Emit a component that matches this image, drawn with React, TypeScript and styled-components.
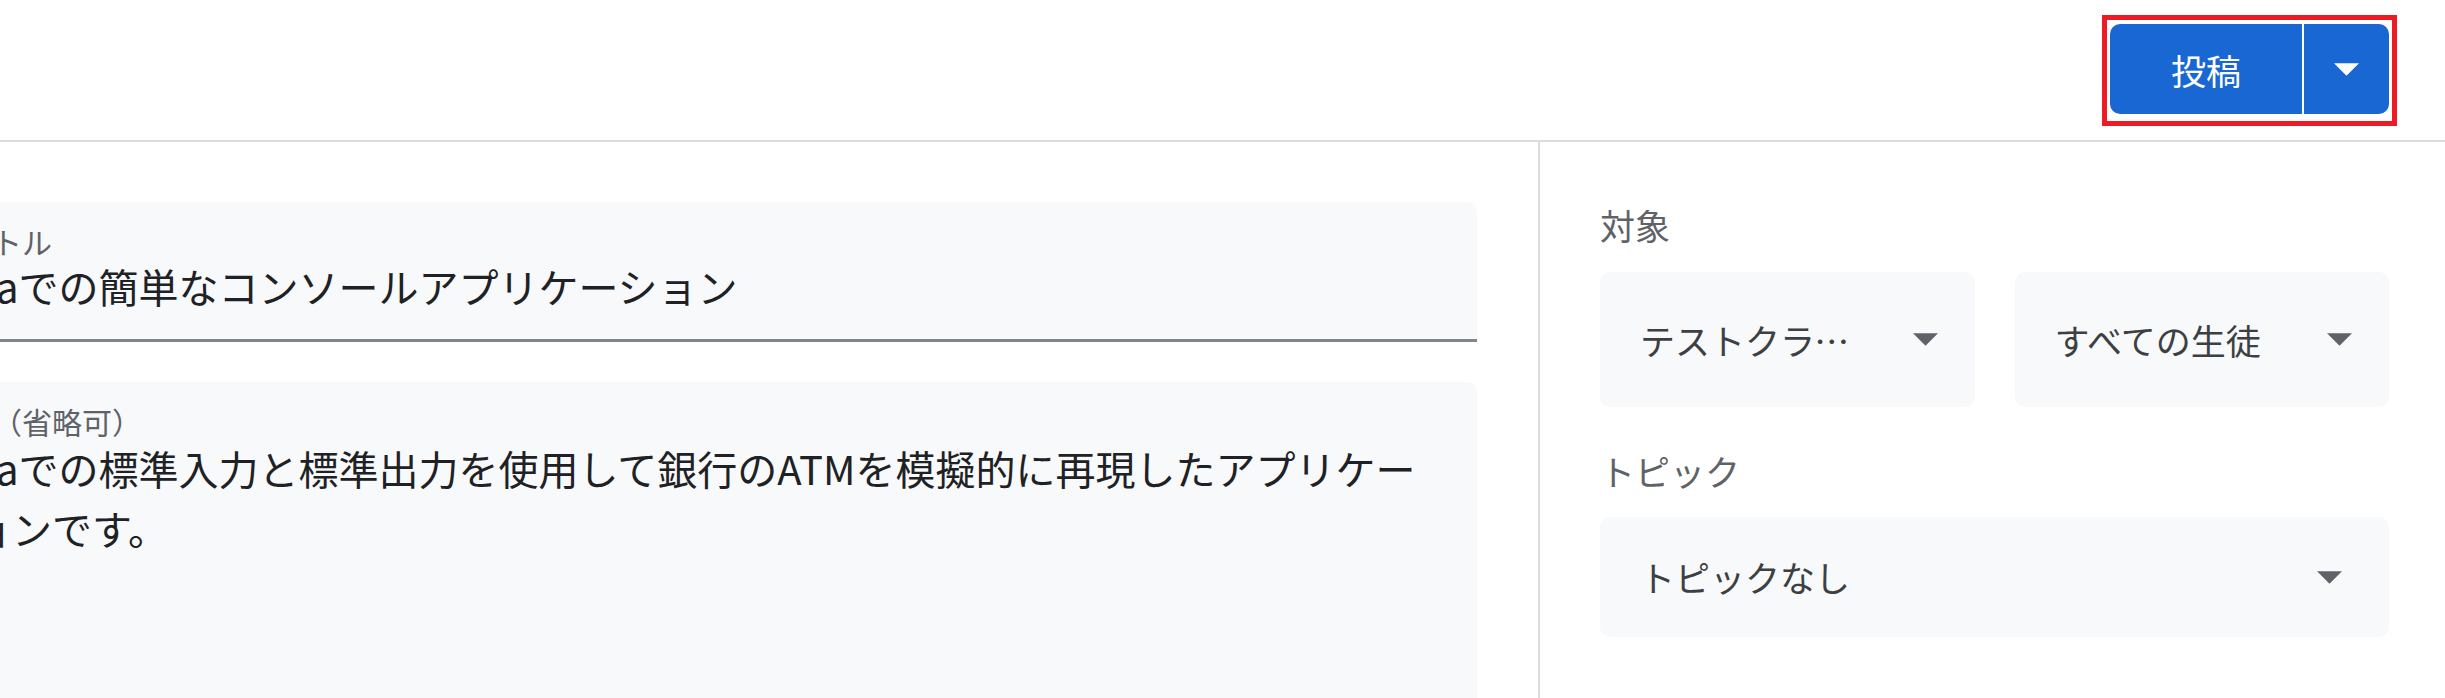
import styled, { createGlobalStyle } from "styled-components";

const GlobalStyle = createGlobalStyle`
  *, *::before, *::after {
    box-sizing: border-box;
  }

  html, body {
    margin: 0;
    padding: 0;
    background: #ffffff;
    overflow: hidden;
  }

  body {
    font-family: "Noto Sans CJK JP", "Noto Sans", sans-serif;
    color: #202124;
  }
`

const Page = styled.div`
  width: 2445px;
  height: 698px;
  display: flex;
  flex-direction: column;
  overflow: hidden;
`

const Header = styled.header`
  height: 142px;
  flex: none;
  display: flex;
  justify-content: flex-end;
  align-items: flex-start;
  padding: 15px 48px 0 0;
  border-bottom: 2px solid #dadce0;
`

// red annotation frame drawn around the post button
const Highlight = styled.div`
  border: 5px solid #ed1c24;
  padding: 4px 3px 7px 3px;
`

const SplitButton = styled.div`
  display: flex;
  height: 90px;
  border-radius: 10px;
  overflow: hidden;
  background: #1967d2;
`

const PostButton = styled.button`
  width: 192px;
  border: none;
  background: transparent;
  color: #ffffff;
  font-family: inherit;
  font-size: 35px;
  font-weight: 400;
  cursor: pointer;
`

const MenuButton = styled.button`
  width: 87px;
  border: none;
  border-left: 2px solid #ffffff;
  background: transparent;
  display: flex;
  align-items: center;
  justify-content: center;
  cursor: pointer;
`

const Main = styled.main`
  flex: 1;
  min-height: 0;
  display: flex;
`

// the editor column is scrolled so its left part is outside the view
const Editor = styled.section`
  flex: 1;
  margin-left: -168px;
  padding: 60px 61px 0 60px;
  border-right: 2px solid #dadce0;
  display: flex;
  flex-direction: column;
  gap: 40px;
`

const Field = styled.div<{ $underline?: boolean; $grow?: boolean }>`
  background: #f8f9fa;
  border-radius: 10px 10px 0 0;
  padding: 22px 40px ${p => (p.$underline ? "25px" : "22px")};
  border-bottom: ${p => (p.$underline ? "3px solid #80868b" : "none")};
  min-height: ${p => (p.$grow ? "360px" : "auto")};
`

const FieldLabel = styled.div`
  font-size: 30px;
  line-height: 34px;
  color: #5f6368;
  white-space: nowrap;
`

const FieldValue = styled.div<{ $multiline?: boolean }>`
  font-size: 40px;
  line-height: ${p => (p.$multiline ? "60px" : "56px")};
  color: #202124;
  white-space: ${p => (p.$multiline ? "normal" : "nowrap")};
`

const Sidebar = styled.aside`
  width: 905px;
  flex: none;
  padding: 58px 56px 0 60px;
  display: flex;
  flex-direction: column;
`

const SideLabel = styled.div<{ $spaced?: boolean }>`
  font-size: 35px;
  line-height: 50px;
  color: #5f6368;
  margin-top: ${p => (p.$spaced ? "39px" : "0")};
`

const SelectRow = styled.div`
  display: grid;
  grid-template-columns: 1fr 1fr;
  gap: 40px;
  margin-top: 22px;
`

const Select = styled.div<{ $height: number; $arrowGap: number; $spaced?: boolean }>`
  height: ${p => p.$height}px;
  background: #f8f9fa;
  border-radius: 10px;
  padding: 0 ${p => p.$arrowGap}px 0 40px;
  display: flex;
  align-items: center;
  justify-content: space-between;
  gap: 20px;
  margin-top: ${p => (p.$spaced ? "21px" : "0")};
`

const SelectText = styled.span<{ $maxWidth?: number }>`
  font-size: 35px;
  line-height: 50px;
  color: #3c4043;
  white-space: nowrap;
  overflow: hidden;
  text-overflow: ellipsis;
  max-width: ${p => (p.$maxWidth ? `${p.$maxWidth}px` : "none")};
`

function DropArrow({ color }: { color: string }) {
  return (
    <svg width="25" height="13" viewBox="7 10 10 5" style={{ flex: "none" }}>
      <path d="M7 10l5 5 5-5z" fill={color} />
    </svg>
  )
}

function App() {
  return (
    <Page>
      <GlobalStyle />
      <Header>
        <Highlight>
          <SplitButton>
            <PostButton>投稿</PostButton>
            <MenuButton>
              <DropArrow color="#ffffff" />
            </MenuButton>
          </SplitButton>
        </Highlight>
      </Header>
      <Main>
        <Editor>
          <Field $underline>
            <FieldLabel>タイトル</FieldLabel>
            <FieldValue>Javaでの簡単なコンソールアプリケーション</FieldValue>
          </Field>
          <Field $grow>
            <FieldLabel>説明（省略可）</FieldLabel>
            <FieldValue $multiline>
              Javaでの標準入力と標準出力を使用して銀行のATMを模擬的に再現したアプリケーションです。
            </FieldValue>
          </Field>
        </Editor>
        <Sidebar>
          <SideLabel>対象</SideLabel>
          <SelectRow>
            <Select $height={135} $arrowGap={37}>
              <SelectText $maxWidth={210}>テストクラス 1</SelectText>
              <DropArrow color="#5f6368" />
            </Select>
            <Select $height={135} $arrowGap={37}>
              <SelectText>すべての生徒</SelectText>
              <DropArrow color="#5f6368" />
            </Select>
          </SelectRow>
          <SideLabel $spaced>トピック</SideLabel>
          <Select $height={120} $arrowGap={47} $spaced>
            <SelectText>トピックなし</SelectText>
            <DropArrow color="#5f6368" />
          </Select>
        </Sidebar>
      </Main>
    </Page>
  )
}

export default App
